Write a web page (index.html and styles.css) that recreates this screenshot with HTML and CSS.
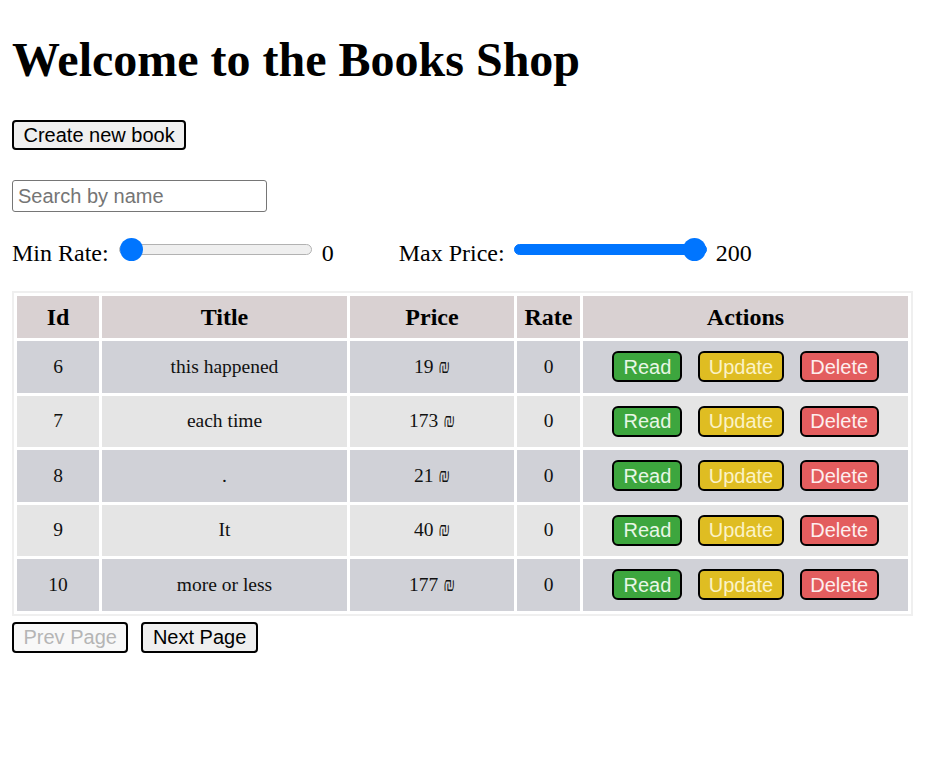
FILE: index.html
```html
<!DOCTYPE html>
<html>
<head>
<meta charset="utf-8">
<title>Books Shop</title>
<link rel="stylesheet" href="styles.css">
</head>
<body>
<div class="page">
  <h1 class="title">Welcome to the Books Shop</h1>
  <div class="create-row"><button class="btn">Create new book</button></div>
  <div class="search-row"><input class="search" type="text" placeholder="Search by name"></div>
  <div class="filters">
    <span class="label">Min Rate:</span>
    <input class="range" type="range" min="0" max="10" value="0">
    <span class="value gap-after">0</span>
    <span class="label">Max Price:</span>
    <input class="range range-full" type="range" min="0" max="200" value="200">
    <span class="value">200</span>
  </div>
  <table class="books">
    <thead>
      <tr class="head-row">
        <th class="c-id">Id</th>
        <th class="c-title">Title</th>
        <th class="c-price">Price</th>
        <th class="c-rate">Rate</th>
        <th class="c-actions">Actions</th>
      </tr>
    </thead>
    <tbody>
      <tr class="row odd">
        <td>6</td><td>this happened</td><td>19 ₪</td><td>0</td>
        <td><div class="actions"><button class="act read">Read</button><button class="act update">Update</button><button class="act delete">Delete</button></div></td>
      </tr>
      <tr class="row even">
        <td>7</td><td>each time</td><td>173 ₪</td><td>0</td>
        <td><div class="actions"><button class="act read">Read</button><button class="act update">Update</button><button class="act delete">Delete</button></div></td>
      </tr>
      <tr class="row odd">
        <td>8</td><td>.</td><td>21 ₪</td><td>0</td>
        <td><div class="actions"><button class="act read">Read</button><button class="act update">Update</button><button class="act delete">Delete</button></div></td>
      </tr>
      <tr class="row even">
        <td>9</td><td>It</td><td>40 ₪</td><td>0</td>
        <td><div class="actions"><button class="act read">Read</button><button class="act update">Update</button><button class="act delete">Delete</button></div></td>
      </tr>
      <tr class="row odd">
        <td>10</td><td>more or less</td><td>177 ₪</td><td>0</td>
        <td><div class="actions"><button class="act read">Read</button><button class="act update">Update</button><button class="act delete">Delete</button></div></td>
      </tr>
    </tbody>
  </table>
  <div class="pager">
    <button class="btn pager-btn" disabled>Prev Page</button>
    <button class="btn pager-btn">Next Page</button>
  </div>
</div>
</body>
</html>
```

FILE: styles.css
```css
html, body {
  margin: 0;
  padding: 0;
  background: #ffffff;
}

.page {
  padding: 12px;
  font-family: "Liberation Serif", "Times New Roman", serif;
  font-size: 24px;
  color: #000;
}

.title {
  font-family: "Liberation Serif", "Times New Roman", serif;
  font-size: 48px;
  font-weight: bold;
  line-height: 55px;
  margin: 20px 0 33px;
}

.btn {
  font-family: "Liberation Sans", Arial, sans-serif;
  font-size: 20px;
  height: 30px;
  padding: 0 9.5px;
  border: 2px solid #000;
  border-radius: 4px;
  background: #efefef;
  color: #000;
  line-height: 24px;
  box-sizing: border-box;
}

.create-row {
  display: flex;
}

.search-row {
  display: flex;
  margin-top: 30px;
}

.search {
  width: 255px;
  height: 32px;
  box-sizing: border-box;
  border: 1px solid #767676;
  border-radius: 3px;
  padding: 0 5px;
  font-family: "Liberation Sans", Arial, sans-serif;
  font-size: 20px;
  color: #000;
}

.search::placeholder {
  color: #757575;
}

.filters {
  display: flex;
  align-items: center;
  height: 27px;
  margin-top: 28px;
}

.label, .value {
  line-height: 27px;
}

.gap-after {
  margin-right: 65px;
}

.range {
  -webkit-appearance: none;
  appearance: none;
  width: 193px;
  height: 24px;
  margin: 0 10px 8px 10px;
  padding: 0;
  background: transparent;
}

.filters .range-full {
  margin-left: 9px;
  margin-right: 9px;
}

.range::-webkit-slider-runnable-track {
  height: 11px;
  box-sizing: border-box;
  background: #efefef;
  border: 1px solid #b2b2b2;
  border-radius: 6px;
}

.range::-webkit-slider-thumb {
  -webkit-appearance: none;
  appearance: none;
  width: 23px;
  height: 23px;
  border-radius: 50%;
  background: #0075ff;
  border: none;
  margin-top: -7px;
}

.range-full::-webkit-slider-runnable-track {
  background: #0075ff;
  border-color: #0075ff;
}

.books {
  margin-top: 24px;
  border: 2px solid #efefef;
  border-spacing: 3px;
  border-collapse: separate;
  table-layout: fixed;
  width: 901px;
}

.books th {
  font-size: 24px;
  font-weight: bold;
  height: 42px;
  padding: 0;
  background: #d9d1d2;
  text-align: center;
}

.c-id { width: 82px; }
.c-title { width: 245px; }
.c-price { width: 164px; }
.c-rate { width: 63px; }
.c-actions { width: 325px; }

.books td {
  font-size: 19.5px;
  height: 51.5px;
  padding: 0;
  text-align: center;
  color: #111;
}

.row.odd td {
  background: #d0d1d7;
}

.row.even td {
  background: #e5e5e5;
}

.actions {
  display: flex;
  justify-content: center;
  gap: 16px;
}

.act {
  font-family: "Liberation Sans", Arial, sans-serif;
  font-size: 20px;
  height: 31px;
  padding: 0 8.5px;
  border: 2px solid #000;
  border-radius: 6px;
  line-height: 24px;
  box-sizing: border-box;
}

.act.read {
  background: #3da63e;
  color: #e8f6e6;
  padding: 0 9px;
}

.act.update {
  background: #dfbd22;
  color: #fbf2c6;
}

.act.delete {
  background: #e35d5e;
  color: #fdeeee;
}

.pager {
  display: flex;
  gap: 13px;
  margin-top: 6px;
}

.pager-btn {
  height: 31px;
  padding: 0 9.5px;
}

.pager-btn:disabled {
  background: #f8f8f8;
  color: #b5b5b5;
}
```
